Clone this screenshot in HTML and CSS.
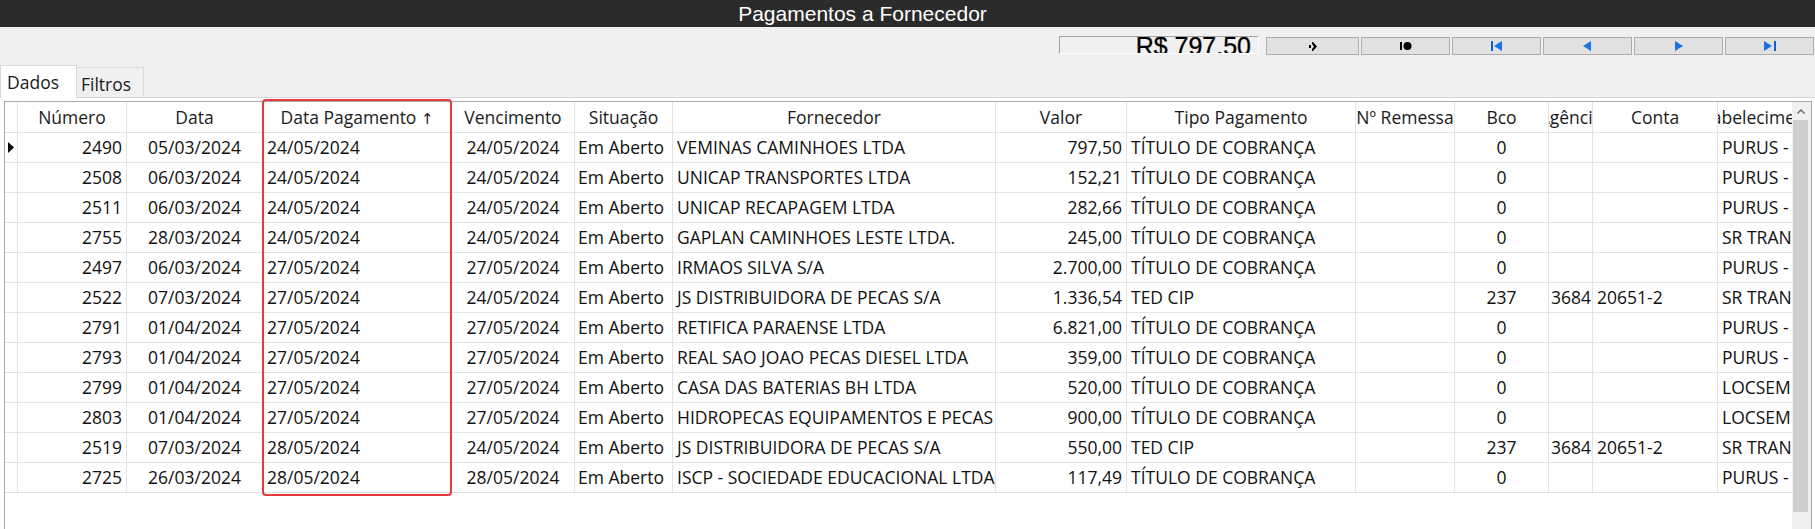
FILE: index.html
```html
<!DOCTYPE html>
<html lang="pt-BR">
<head>
<meta charset="utf-8">
<title>Pagamentos a Fornecedor</title>
<link rel="stylesheet" href="styles.css">
</head>
<body>
<div class="app">
  <header class="titlebar"><span>Pagamentos a Fornecedor</span></header>

  <div class="toolbar">
    <div class="total"><span>R$ 797.50</span></div>
    <div class="navbtns">
      <button class="nav nav-wide" title="Ir">
        <svg width="8" height="9" viewBox="0 0 8 9"><rect x="0" y="3" width="2" height="3" fill="#000"/><polygon points="3,0 4,0 8,4.5 4,9 3,9 3,7 5,4.5 3,2" fill="#000"/></svg>
      </button>
      <button class="nav" title="Marcar">
        <svg width="12" height="10" viewBox="0 0 12 10"><rect x="0" y="1" width="2" height="8" fill="#000"/><circle cx="7.5" cy="5" r="4" fill="#000"/></svg>
      </button>
      <button class="nav" title="Primeiro">
        <svg width="12" height="10" viewBox="0 0 12 10"><rect x="0" y="0" width="2" height="10" fill="#0a62d6"/><polygon points="3,5 11,0 11,10" fill="#1a74e6"/></svg>
      </button>
      <button class="nav" title="Anterior">
        <svg width="9" height="10" viewBox="0 0 9 10"><polygon points="0,5 8,0 8,10" fill="#1a74e6"/></svg>
      </button>
      <button class="nav" title="Próximo">
        <svg width="9" height="10" viewBox="0 0 9 10"><polygon points="1,0 9,5 1,10" fill="#1a74e6"/></svg>
      </button>
      <button class="nav" title="Último">
        <svg width="12" height="10" viewBox="0 0 12 10"><polygon points="0,0 8,5 0,10" fill="#1a74e6"/><rect x="10" y="0" width="2" height="10" fill="#0a62d6"/></svg>
      </button>
    </div>
  </div>

  <div class="tabs">
    <div class="tab tab-active">Dados</div>
    <div class="tab tab-idle">Filtros</div>
  </div>

  <div class="panel">
    <div class="grid">
      <div class="grid-main">
        <div class="row head">
          <div class="cell"></div>
          <div class="cell"><span>Número</span></div>
          <div class="cell"><span>Data</span></div>
          <div class="cell"><span>Data Pagamento <span class="sort-arrow">↑</span></span></div>
          <div class="cell"><span>Vencimento</span></div>
          <div class="cell"><span>Situação</span></div>
          <div class="cell"><span>Fornecedor</span></div>
          <div class="cell"><span>Valor</span></div>
          <div class="cell"><span>Tipo Pagamento</span></div>
          <div class="cell"><span>Nº Remessa</span></div>
          <div class="cell"><span>Bco</span></div>
          <div class="cell"><span>Agência</span></div>
          <div class="cell"><span>Conta</span></div>
          <div class="cell"><span>Estabelecimento</span></div>
        </div>

        <div class="row">
          <div class="cell ind"><svg width="6" height="11" viewBox="0 0 6 11"><polygon points="0,0 6,5.5 0,11" fill="#000"/></svg></div>
          <div class="cell r">2490</div><div class="cell c">05/03/2024</div><div class="cell l">24/05/2024</div><div class="cell c">24/05/2024</div><div class="cell l sit">Em Aberto</div><div class="cell l">VEMINAS CAMINHOES LTDA</div><div class="cell r">797,50</div><div class="cell l">TÍTULO DE COBRANÇA</div><div class="cell"></div><div class="cell c">0</div><div class="cell r ag"></div><div class="cell l"></div><div class="cell l">PURUS - MATRIZ</div>
        </div>
        <div class="row">
          <div class="cell ind"></div>
          <div class="cell r">2508</div><div class="cell c">06/03/2024</div><div class="cell l">24/05/2024</div><div class="cell c">24/05/2024</div><div class="cell l sit">Em Aberto</div><div class="cell l">UNICAP TRANSPORTES LTDA</div><div class="cell r">152,21</div><div class="cell l">TÍTULO DE COBRANÇA</div><div class="cell"></div><div class="cell c">0</div><div class="cell r ag"></div><div class="cell l"></div><div class="cell l">PURUS - MATRIZ</div>
        </div>
        <div class="row">
          <div class="cell ind"></div>
          <div class="cell r">2511</div><div class="cell c">06/03/2024</div><div class="cell l">24/05/2024</div><div class="cell c">24/05/2024</div><div class="cell l sit">Em Aberto</div><div class="cell l">UNICAP RECAPAGEM LTDA</div><div class="cell r">282,66</div><div class="cell l">TÍTULO DE COBRANÇA</div><div class="cell"></div><div class="cell c">0</div><div class="cell r ag"></div><div class="cell l"></div><div class="cell l">PURUS - MATRIZ</div>
        </div>
        <div class="row">
          <div class="cell ind"></div>
          <div class="cell r">2755</div><div class="cell c">28/03/2024</div><div class="cell l">24/05/2024</div><div class="cell c">24/05/2024</div><div class="cell l sit">Em Aberto</div><div class="cell l">GAPLAN CAMINHOES LESTE LTDA.</div><div class="cell r">245,00</div><div class="cell l">TÍTULO DE COBRANÇA</div><div class="cell"></div><div class="cell c">0</div><div class="cell r ag"></div><div class="cell l"></div><div class="cell l">SR TRANSPORTES</div>
        </div>
        <div class="row">
          <div class="cell ind"></div>
          <div class="cell r">2497</div><div class="cell c">06/03/2024</div><div class="cell l">27/05/2024</div><div class="cell c">27/05/2024</div><div class="cell l sit">Em Aberto</div><div class="cell l">IRMAOS SILVA S/A</div><div class="cell r">2.700,00</div><div class="cell l">TÍTULO DE COBRANÇA</div><div class="cell"></div><div class="cell c">0</div><div class="cell r ag"></div><div class="cell l"></div><div class="cell l">PURUS - MATRIZ</div>
        </div>
        <div class="row">
          <div class="cell ind"></div>
          <div class="cell r">2522</div><div class="cell c">07/03/2024</div><div class="cell l">27/05/2024</div><div class="cell c">24/05/2024</div><div class="cell l sit">Em Aberto</div><div class="cell l">JS DISTRIBUIDORA DE PECAS S/A</div><div class="cell r">1.336,54</div><div class="cell l">TED CIP</div><div class="cell"></div><div class="cell c">237</div><div class="cell r ag">3684</div><div class="cell l">20651-2</div><div class="cell l">SR TRANSPORTES</div>
        </div>
        <div class="row">
          <div class="cell ind"></div>
          <div class="cell r">2791</div><div class="cell c">01/04/2024</div><div class="cell l">27/05/2024</div><div class="cell c">27/05/2024</div><div class="cell l sit">Em Aberto</div><div class="cell l">RETIFICA PARAENSE LTDA</div><div class="cell r">6.821,00</div><div class="cell l">TÍTULO DE COBRANÇA</div><div class="cell"></div><div class="cell c">0</div><div class="cell r ag"></div><div class="cell l"></div><div class="cell l">PURUS - MATRIZ</div>
        </div>
        <div class="row">
          <div class="cell ind"></div>
          <div class="cell r">2793</div><div class="cell c">01/04/2024</div><div class="cell l">27/05/2024</div><div class="cell c">27/05/2024</div><div class="cell l sit">Em Aberto</div><div class="cell l">REAL SAO JOAO PECAS DIESEL LTDA</div><div class="cell r">359,00</div><div class="cell l">TÍTULO DE COBRANÇA</div><div class="cell"></div><div class="cell c">0</div><div class="cell r ag"></div><div class="cell l"></div><div class="cell l">PURUS - MATRIZ</div>
        </div>
        <div class="row">
          <div class="cell ind"></div>
          <div class="cell r">2799</div><div class="cell c">01/04/2024</div><div class="cell l">27/05/2024</div><div class="cell c">27/05/2024</div><div class="cell l sit">Em Aberto</div><div class="cell l">CASA DAS BATERIAS BH LTDA</div><div class="cell r">520,00</div><div class="cell l">TÍTULO DE COBRANÇA</div><div class="cell"></div><div class="cell c">0</div><div class="cell r ag"></div><div class="cell l"></div><div class="cell l">LOCSEMI LOCAÇÕES</div>
        </div>
        <div class="row">
          <div class="cell ind"></div>
          <div class="cell r">2803</div><div class="cell c">01/04/2024</div><div class="cell l">27/05/2024</div><div class="cell c">27/05/2024</div><div class="cell l sit">Em Aberto</div><div class="cell l">HIDROPECAS EQUIPAMENTOS E PECAS LTDA</div><div class="cell r">900,00</div><div class="cell l">TÍTULO DE COBRANÇA</div><div class="cell"></div><div class="cell c">0</div><div class="cell r ag"></div><div class="cell l"></div><div class="cell l">LOCSEMI LOCAÇÕES</div>
        </div>
        <div class="row">
          <div class="cell ind"></div>
          <div class="cell r">2519</div><div class="cell c">07/03/2024</div><div class="cell l">28/05/2024</div><div class="cell c">24/05/2024</div><div class="cell l sit">Em Aberto</div><div class="cell l">JS DISTRIBUIDORA DE PECAS S/A</div><div class="cell r">550,00</div><div class="cell l">TED CIP</div><div class="cell"></div><div class="cell c">237</div><div class="cell r ag">3684</div><div class="cell l">20651-2</div><div class="cell l">SR TRANSPORTES</div>
        </div>
        <div class="row">
          <div class="cell ind"></div>
          <div class="cell r">2725</div><div class="cell c">26/03/2024</div><div class="cell l">28/05/2024</div><div class="cell c">28/05/2024</div><div class="cell l sit">Em Aberto</div><div class="cell l">ISCP - SOCIEDADE EDUCACIONAL LTDA</div><div class="cell r">117,49</div><div class="cell l">TÍTULO DE COBRANÇA</div><div class="cell"></div><div class="cell c">0</div><div class="cell r ag"></div><div class="cell l"></div><div class="cell l">PURUS - MATRIZ</div>
        </div>
      </div>

      <div class="vscroll">
        <div class="vs-up"><svg width="8" height="5" viewBox="0 0 8 5"><polyline points="0.5,4.5 4,1 7.5,4.5" fill="none" stroke="#606060" stroke-width="1.3"/></svg></div>
        <div class="vs-thumb"></div>
      </div>
    </div>
    <div class="sort-highlight"></div>
  </div>
</div>
</body>
</html>
```
FILE: styles.css
```css
html, body {
  margin: 0;
  padding: 0;
}

body {
  width: 1815px;
  height: 529px;
  overflow: hidden;
  background: #f0f0f0;
  font-family: "Open Sans", "Noto Sans", sans-serif;
  color: #111;
}

.app {
  width: 1815px;
}

/* ---------- title bar ---------- */
.titlebar {
  height: 27px;
  background: #2b2b2b;
  color: #fff;
  font-family: "Liberation Sans", Arial, sans-serif;
  font-size: 21px;
  line-height: 27px;
  text-align: center;
  padding-right: 90px;
}

/* ---------- toolbar ---------- */
.toolbar {
  height: 38px;
  box-sizing: border-box;
  display: flex;
  justify-content: flex-end;
  align-items: flex-start;
  padding: 9px 1px 0 0;
}

.total {
  width: 200px;
  height: 18px;
  box-sizing: border-box;
  margin-right: 7px;
  border-top: 1px solid #a0a0a0;
  border-left: 1px solid #a0a0a0;
  border-right: 1px solid #ffffff;
  border-bottom: 1px solid #ffffff;
  overflow: hidden;
  text-align: right;
  padding-right: 7px;
  font-family: "Liberation Sans", Arial, sans-serif;
  font-size: 25px;
  line-height: 25px;
  color: #000;
  -webkit-text-stroke: 0.3px #000;
}

.total span {
  display: block;
  margin-top: -3px;
}

.navbtns {
  display: flex;
  gap: 2px;
  margin-top: 1px;
}

.nav {
  width: 89px;
  height: 18px;
  box-sizing: border-box;
  border: 1px solid #adadad;
  background: #e1e1e1;
  padding: 0;
  margin: 0;
  display: flex;
  align-items: center;
  justify-content: center;
}

.nav-wide {
  width: 93px;
}

/* ---------- tabs ---------- */
.tabs {
  height: 32px;
  display: flex;
  align-items: flex-end;
  font-size: 17.5px;
  color: #1a1a1a;
}

.tab {
  box-sizing: border-box;
  border: 1px solid #d9d9d9;
  border-bottom: none;
  padding-top: 4px;
  white-space: nowrap;
}

.tab-active {
  position: relative;
  z-index: 2;
  width: 77px;
  height: 33px;
  margin-bottom: -1px;
  background: #fff;
  padding-left: 6px;
}

.tab-idle {
  width: 68px;
  height: 30px;
  margin-left: -1px;
  background: #f0f0f0;
  padding-left: 4px;
}

/* ---------- panel / grid ---------- */
.panel {
  position: relative;
  border-top: 1px solid #d9d9d9;
  background: #fff;
  padding: 3px 3px 0 4px;
  height: 440px;
}

.grid {
  display: flex;
  height: 460px;
  border: 1px solid #ababab;
  background: #fff;
}

.grid-main {
  flex: 1;
  overflow: hidden;
}

.row {
  display: grid;
  grid-template-columns: 13px 109px 136px 189px 123px 98px 323px 131px 229px 99px 94px 44px 125px 74px;
  height: 30px;
}

.cell {
  box-sizing: border-box;
  border-right: 1px solid #e3e3e3;
  border-bottom: 1px solid #e3e3e3;
  overflow: hidden;
  white-space: nowrap;
  line-height: 29px;
  padding: 0 4px;
  font-size: 17.5px;
  color: #111;
}

.row .cell:last-child {
  border-right: none;
}

.head {
  height: 31px;
}

.head .cell {
  display: flex;
  justify-content: center;
  line-height: 30px;
  color: #1a1a1a;
}

.head .cell > span {
  flex-shrink: 0;
}

.sort-arrow {
  font-family: "DejaVu Sans", sans-serif;
  font-size: 15px;
}

.cell.r { text-align: right; }
.cell.c { text-align: center; }
.cell.l { text-align: left; }
.cell.sit { padding-left: 3px; }
.cell.ag { padding: 0 1px 0 0; }

.cell.ind {
  padding: 0 0 0 3px;
  display: flex;
  align-items: center;
}

/* ---------- scrollbar ---------- */
.vscroll {
  width: 19px;
  flex-shrink: 0;
  background: #f0f0f0;
  display: flex;
  flex-direction: column;
}

.vs-up {
  height: 18px;
  display: flex;
  align-items: center;
  justify-content: center;
  padding-right: 2px;
}

.vs-thumb {
  height: 392px;
  margin: 0 3px 0 1px;
  background: #cdcdcd;
}

/* ---------- sort column highlight (annotation overlay) ---------- */
.sort-highlight {
  position: absolute;
  left: 262px;
  top: 1px;
  width: 190px;
  height: 397px;
  box-sizing: border-box;
  border: 2px solid #e5393f;
  border-radius: 4px;
  pointer-events: none;
}
```
